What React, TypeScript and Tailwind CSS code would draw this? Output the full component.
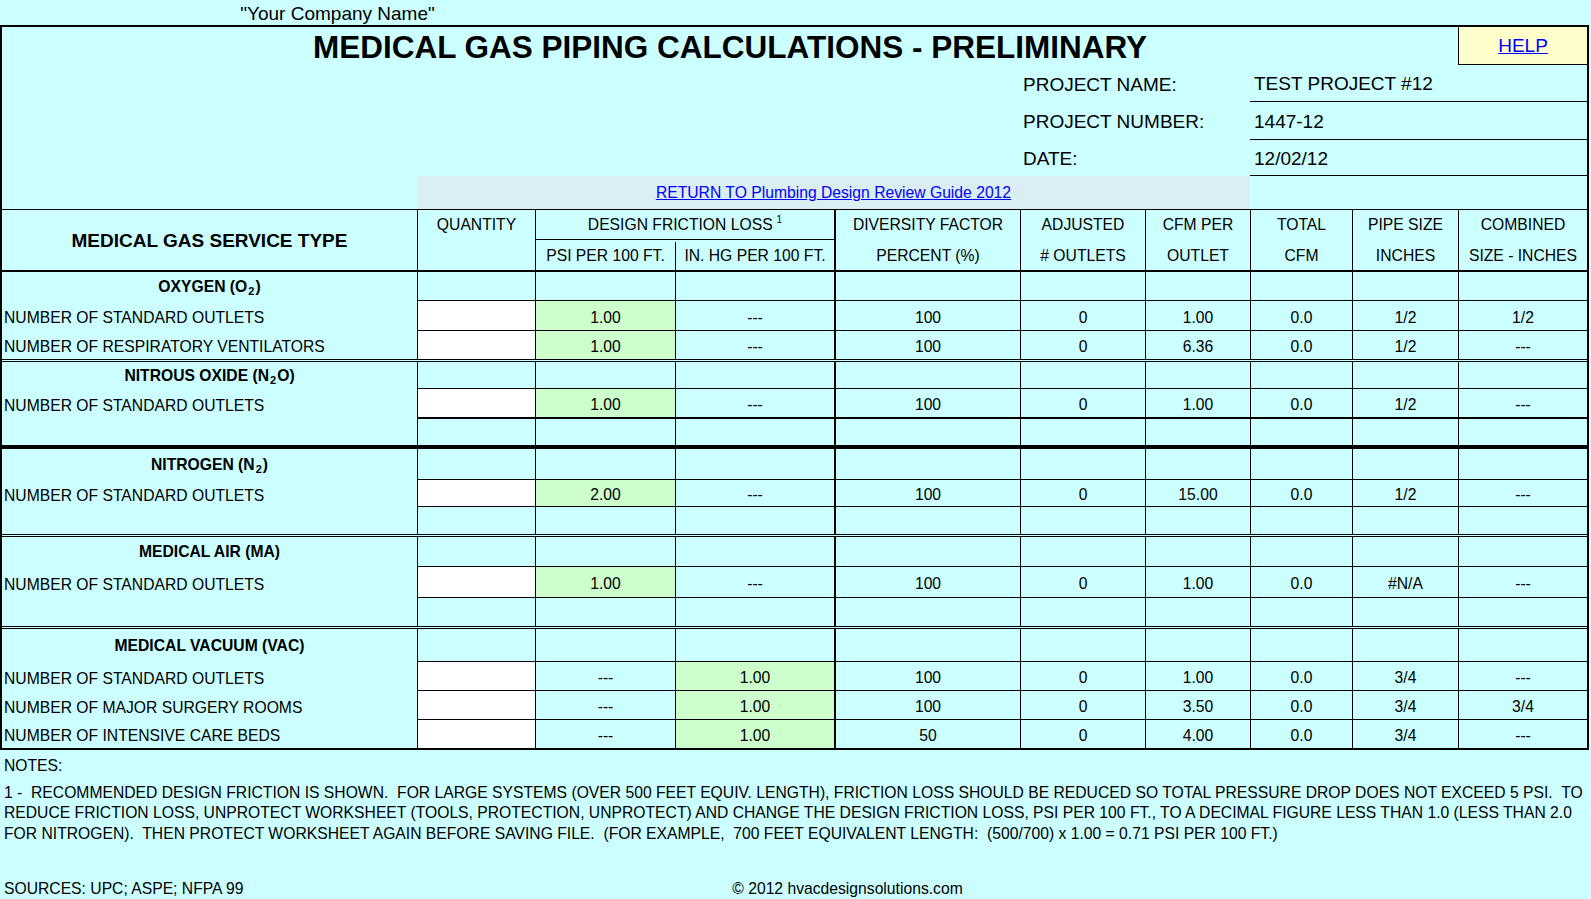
import React from "react";

type Cell = { v?: string; bg?: "w" | "g" };
type Row = {
  h: string;
  label?: React.ReactNode;
  title?: boolean;
  cells?: Cell[];
  bb: string;
};
type Group = { rows: Row[]; gb: string };

const colW = [
  "w-[118px] border-l",
  "w-[140px] border-l",
  "w-[159px] border-l",
  "w-[186px] border-l-2",
  "w-[125px] border-l",
  "w-[105px] border-l",
  "w-[102px] border-l",
  "w-[106px] border-l",
  "w-[129px] border-l",
];

const empty: Cell[] = Array.from({ length: 9 }, () => ({}));

const mk = (
  a: string,
  b: string,
  c: string,
  d: string,
  e: string,
  f: string,
  g: string,
  h: string,
  vac = false
): Cell[] => [
  { bg: "w" },
  { v: a, bg: vac ? undefined : "g" },
  { v: b, bg: vac ? "g" : undefined },
  { v: c },
  { v: d },
  { v: e },
  { v: f },
  { v: g },
  { v: h },
];

const Sub = ({ children }: { children: React.ReactNode }) => (
  <sub className="text-[11px] bottom-[-4px] mx-[1px]">{children}</sub>
);

const groups: Group[] = [
  {
    gb: "border-b-[3px] border-double border-black",
    rows: [
      { h: "h-[29px]", title: true, label: <>OXYGEN (O<Sub>2</Sub>)</>, cells: empty, bb: "border-b border-black" },
      { h: "h-[30px]", label: "NUMBER OF STANDARD OUTLETS", cells: mk("1.00", "---", "100", "0", "1.00", "0.0", "1/2", "1/2"), bb: "border-b border-black" },
      { h: "h-[28px]", label: "NUMBER OF RESPIRATORY VENTILATORS", cells: mk("1.00", "---", "100", "0", "6.36", "0.0", "1/2", "---"), bb: "" },
    ],
  },
  {
    gb: "border-b-4 border-black",
    rows: [
      { h: "h-[27px]", title: true, label: <>NITROUS OXIDE (N<Sub>2</Sub>O)</>, cells: empty, bb: "border-b border-black" },
      { h: "h-[30px]", label: "NUMBER OF STANDARD OUTLETS", cells: mk("1.00", "---", "100", "0", "1.00", "0.0", "1/2", "---"), bb: "border-b-2 border-black" },
      { h: "h-[26px]", cells: empty, bb: "" },
    ],
  },
  {
    gb: "border-b-[3px] border-double border-black",
    rows: [
      { h: "h-[31px]", title: true, label: <>NITROGEN (N<Sub>2</Sub>)</>, cells: empty, bb: "border-b border-black" },
      { h: "h-[27px]", label: "NUMBER OF STANDARD OUTLETS", cells: mk("2.00", "---", "100", "0", "15.00", "0.0", "1/2", "---"), bb: "border-b border-black" },
      { h: "h-[27px]", cells: empty, bb: "" },
    ],
  },
  {
    gb: "border-b-[3px] border-double border-black",
    rows: [
      { h: "h-[30px]", title: true, label: "MEDICAL AIR (MA)", cells: empty, bb: "border-b border-black" },
      { h: "h-[31px]", label: "NUMBER OF STANDARD OUTLETS", cells: mk("1.00", "---", "100", "0", "1.00", "0.0", "#N/A", "---"), bb: "border-b border-black" },
      { h: "h-[28px]", cells: empty, bb: "" },
    ],
  },
  {
    gb: "",
    rows: [
      { h: "h-[33px]", title: true, label: "MEDICAL VACUUM (VAC)", cells: empty, bb: "border-b border-black" },
      { h: "h-[29px]", label: "NUMBER OF STANDARD OUTLETS", cells: mk("---", "1.00", "100", "0", "1.00", "0.0", "3/4", "---", true), bb: "border-b border-black" },
      { h: "h-[29px]", label: "NUMBER OF MAJOR SURGERY ROOMS", cells: mk("---", "1.00", "100", "0", "3.50", "0.0", "3/4", "3/4", true), bb: "border-b border-black" },
      { h: "h-[28px]", label: "NUMBER OF INTENSIVE CARE BEDS", cells: mk("---", "1.00", "50", "0", "4.00", "0.0", "3/4", "---", true), bb: "" },
    ],
  },
];

function HeaderCell({ w, l1, l2 }: { w: string; l1: string; l2?: string }) {
  return (
    <div className={`${w} border-black flex flex-col`}>
      <div className="h-[30px] flex items-center justify-center whitespace-nowrap">{l1}</div>
      <div className="h-[30px] pt-[2px] flex items-center justify-center whitespace-nowrap">{l2}</div>
    </div>
  );
}

function ProjectRow({ h, label, value }: { h: string; label: string; value: string }) {
  return (
    <div className={`flex ${h}`}>
      <div className="w-[1021px]" />
      <div className="w-[227px] flex items-center pt-[3px] text-[19px] whitespace-nowrap">{label}</div>
      <div className="w-[337px] flex items-center pt-[3px] pl-[4px] text-[19px] border-b border-black">{value}</div>
    </div>
  );
}

export default function App() {
  return (
    <div className="w-[1591px] h-[899px] bg-[#ccffff] text-black font-['Liberation_Sans',Arial,sans-serif] text-[15.7px] overflow-hidden">
      <div className="h-[25px] w-[675px] flex items-center justify-center text-[19px] leading-none pt-[1px]">
        "Your Company Name"
      </div>
      <div className="w-[1589px] border-2 border-black">
        {/* top section */}
        <div className="flex h-[38px]">
          <div className="w-[1456px] flex items-center justify-center pt-[4px] font-bold text-[31.5px] whitespace-nowrap">
            MEDICAL GAS PIPING CALCULATIONS - PRELIMINARY
          </div>
          <div className="w-[129px] border-l border-b border-black bg-[#ffffcc] flex items-center justify-center pt-[2px]">
            <span className="text-[#0000ff] underline text-[19px]">HELP</span>
          </div>
        </div>
        <ProjectRow h="h-[37px]" label="PROJECT NAME:" value="TEST PROJECT #12" />
        <ProjectRow h="h-[38px]" label="PROJECT NUMBER:" value="1447-12" />
        <ProjectRow h="h-[36px]" label="DATE:" value="12/02/12" />
        <div className="flex h-[33px]">
          <div className="w-[415px]" />
          <div className="w-[833px] bg-[#daeef3] flex items-center justify-center">
            <span className="text-[#0000ff] underline">RETURN TO Plumbing Design Review Guide 2012</span>
          </div>
          <div className="w-[337px]" />
        </div>

        {/* header */}
        <div className="flex h-[63px] border-t border-b-2 border-black">
          <div className="w-[415px] flex items-center justify-center pt-[2px] font-bold text-[19px]">MEDICAL GAS SERVICE TYPE</div>
          <HeaderCell w="w-[118px] border-l" l1="QUANTITY" />
          <div className="w-[299px] border-l border-black flex flex-col">
            <div className="h-[30px] border-b border-black flex items-center justify-center whitespace-nowrap">
              DESIGN FRICTION LOSS <sup className="text-[10px] ml-[4px]">1</sup>
            </div>
            <div className="flex h-[30px] pt-[2px]">
              <div className="w-[139px] flex items-center justify-center whitespace-nowrap">PSI PER 100 FT.</div>
              <div className="w-[159px] border-l border-black flex items-center justify-center whitespace-nowrap">IN. HG PER 100 FT.</div>
            </div>
          </div>
          <HeaderCell w="w-[186px] border-l-2" l1="DIVERSITY FACTOR" l2="PERCENT (%)" />
          <HeaderCell w="w-[125px] border-l" l1="ADJUSTED" l2="# OUTLETS" />
          <HeaderCell w="w-[105px] border-l" l1="CFM PER" l2="OUTLET" />
          <HeaderCell w="w-[102px] border-l" l1="TOTAL" l2="CFM" />
          <HeaderCell w="w-[106px] border-l" l1="PIPE SIZE" l2="INCHES" />
          <HeaderCell w="w-[129px] border-l" l1="COMBINED" l2="SIZE - INCHES" />
        </div>

        {/* groups */}
        {groups.map((g, gi) => (
          <div key={gi} className={`flex flex-col ${g.gb}`}>
            {g.rows.map((r, ri) => (
              <div key={ri} className={`flex ${r.h}`}>
                <div
                  className={`w-[415px] flex items-center whitespace-nowrap ${
                    r.title ? "justify-center font-bold" : "pl-[2px] pt-[4px]"
                  }`}
                >
                  {r.label}
                </div>
                <div className={`flex ${r.bb}`}>
                  {(r.cells || empty).map((c, ci) => (
                    <div
                      key={ci}
                      className={`${colW[ci]} border-black flex items-center justify-center ${
                        r.title ? "" : "pt-[4px]"
                      } ${c.bg === "w" ? "bg-white" : c.bg === "g" ? "bg-[#ccffcc]" : ""}`}
                    >
                      {c.v}
                    </div>
                  ))}
                </div>
              </div>
            ))}
          </div>
        ))}
      </div>

      {/* notes */}
      <div className="h-[28px] flex items-center pl-[4px] pt-[3px]">NOTES:</div>
      <div className="mt-[5px] pl-[4px] leading-[20.3px] whitespace-pre">
        <div>1 -  RECOMMENDED DESIGN FRICTION IS SHOWN.  FOR LARGE SYSTEMS (OVER 500 FEET EQUIV. LENGTH), FRICTION LOSS SHOULD BE REDUCED SO TOTAL PRESSURE DROP DOES NOT EXCEED 5 PSI.  TO</div>
        <div>REDUCE FRICTION LOSS, UNPROTECT WORKSHEET (TOOLS, PROTECTION, UNPROTECT) AND CHANGE THE DESIGN FRICTION LOSS, PSI PER 100 FT., TO A DECIMAL FIGURE LESS THAN 1.0 (LESS THAN 2.0</div>
        <div>FOR NITROGEN).  THEN PROTECT WORKSHEET AGAIN BEFORE SAVING FILE.  (FOR EXAMPLE,  700 FEET EQUIVALENT LENGTH:  (500/700) x 1.00 = 0.71 PSI PER 100 FT.)</div>
      </div>
      <div className="mt-[35px] flex h-[20px] items-center">
        <div className="w-[675px] pl-[4px]">SOURCES: UPC; ASPE; NFPA 99</div>
        <div className="w-[345px] text-center whitespace-nowrap">© 2012 hvacdesignsolutions.com</div>
      </div>
    </div>
  );
}
